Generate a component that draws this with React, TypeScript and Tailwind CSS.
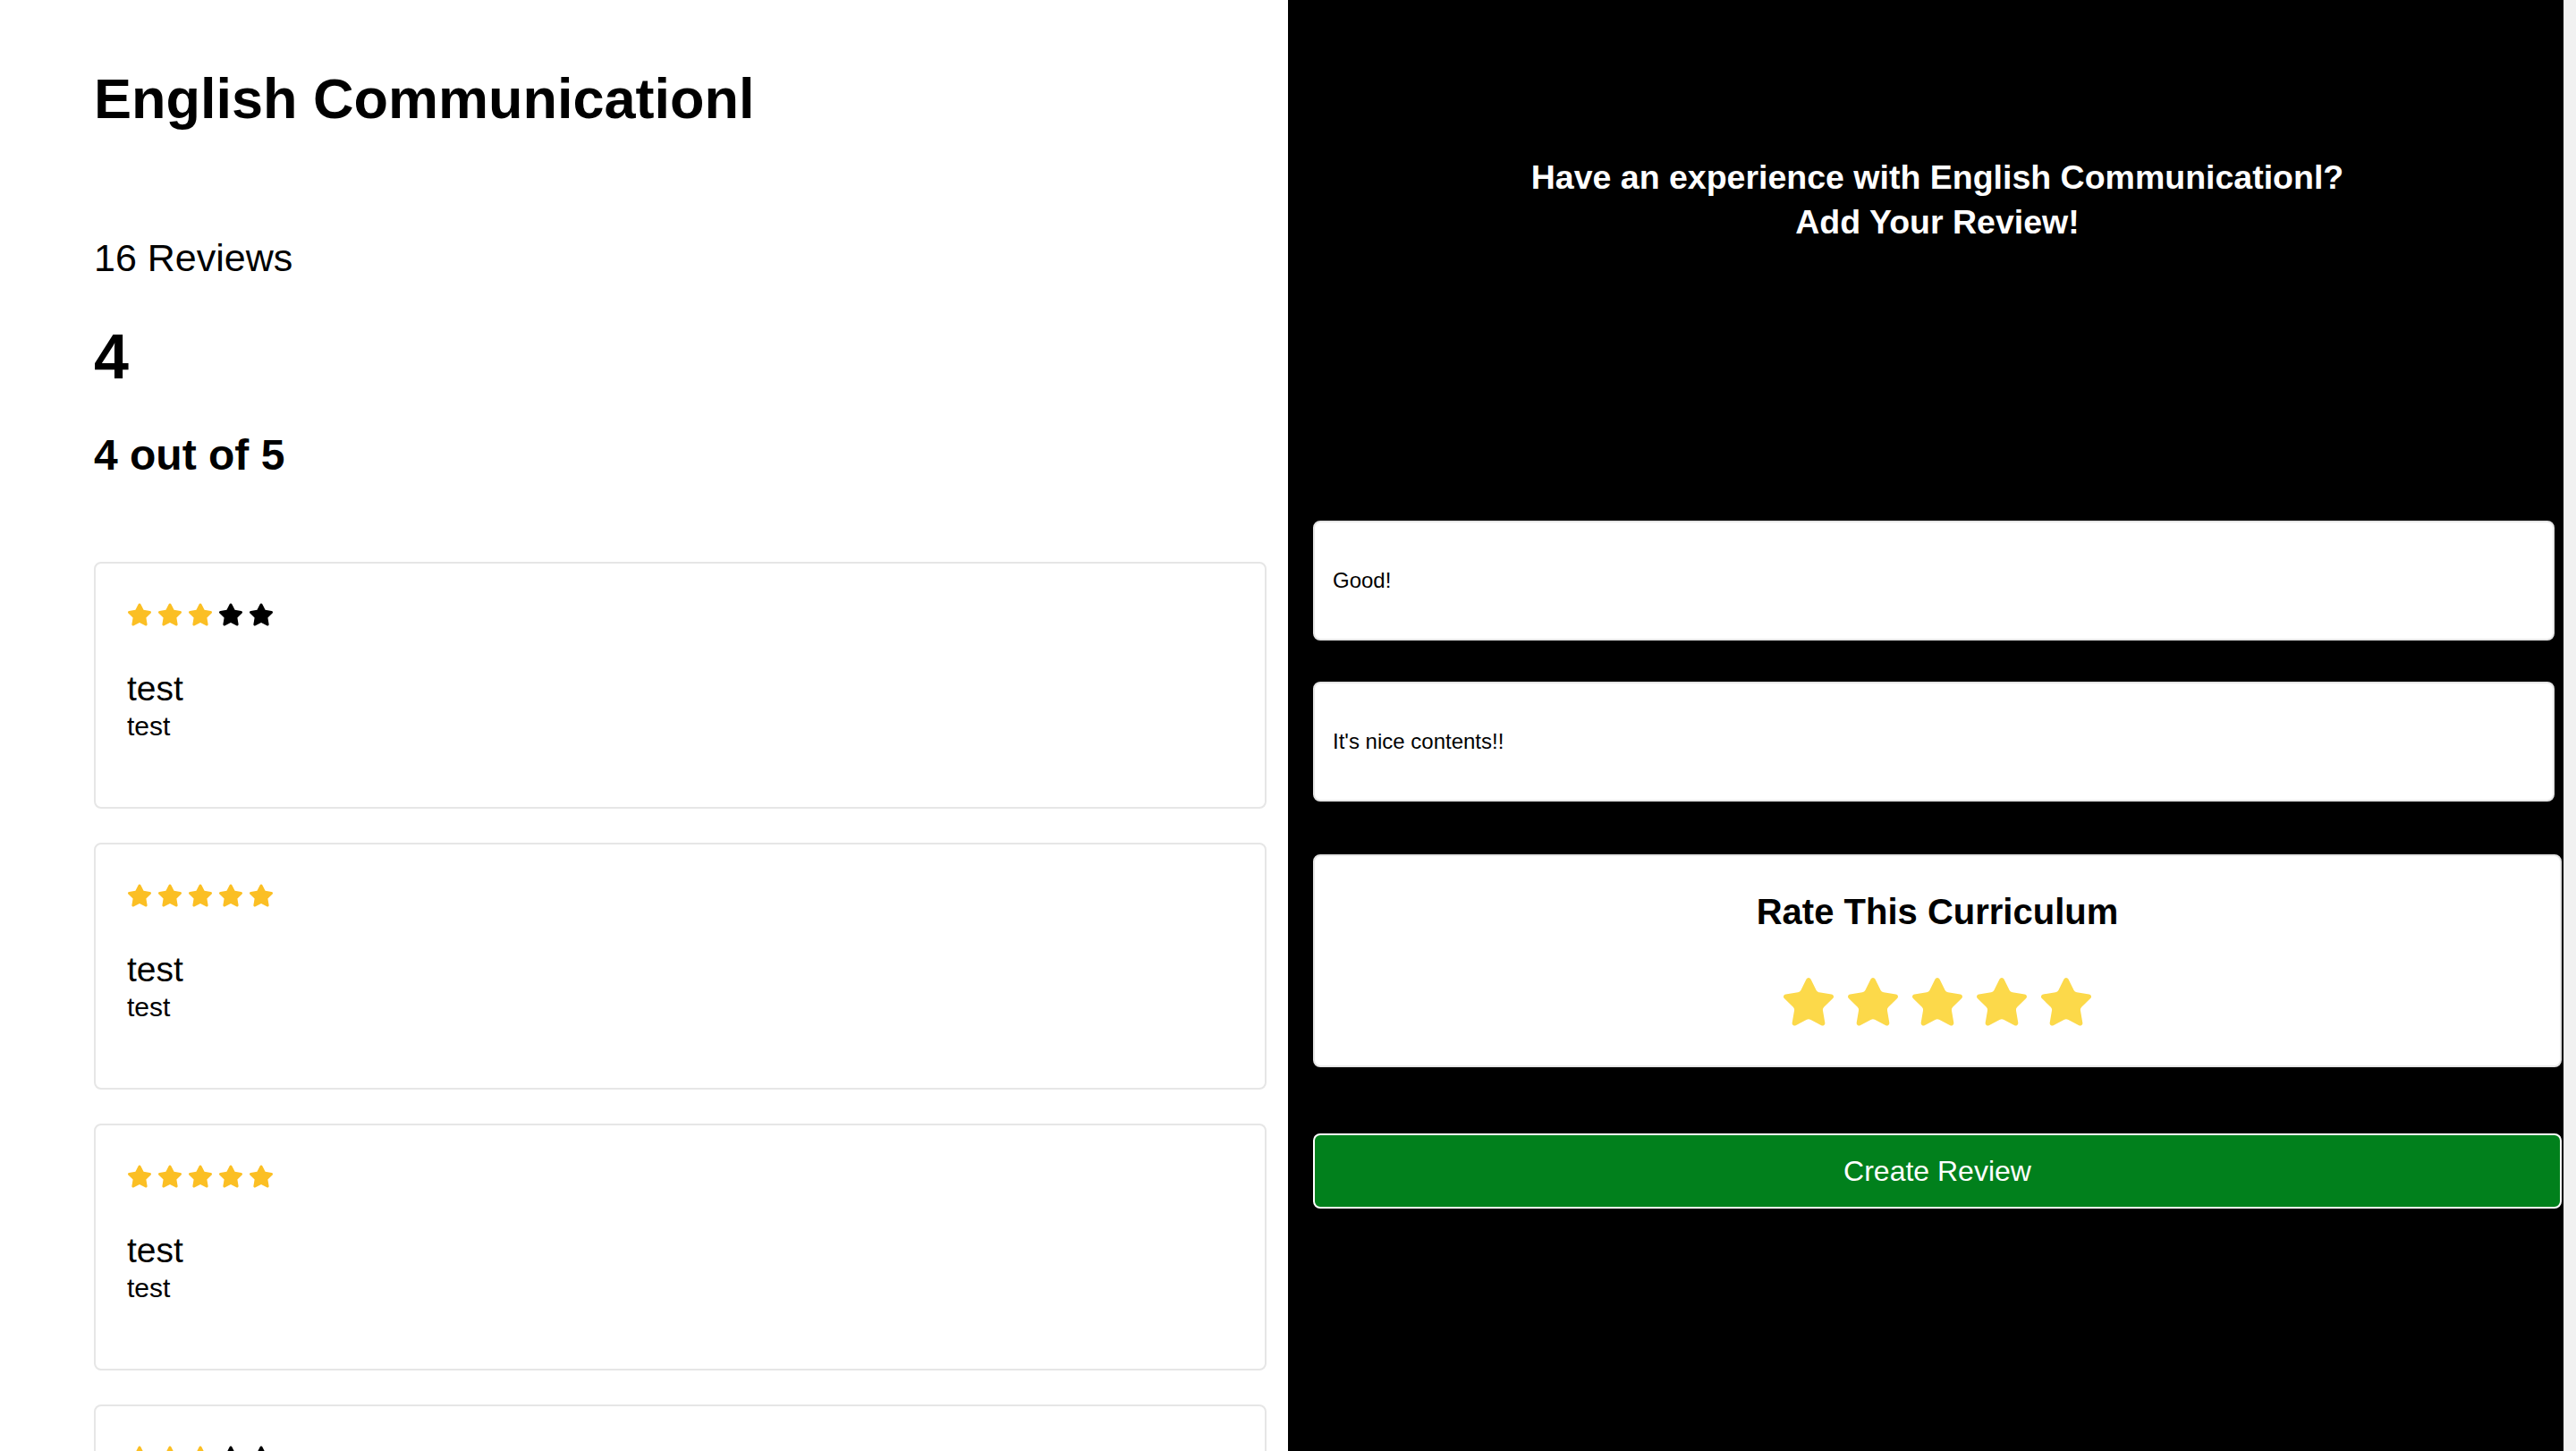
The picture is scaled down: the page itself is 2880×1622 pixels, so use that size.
import { Star } from "lucide-react";
import { FaStar } from "react-icons/fa";

const reviews = [
  { id: 1, rating: 3, title: "test", body: "test" },
  { id: 2, rating: 5, title: "test", body: "test" },
  { id: 3, rating: 5, title: "test", body: "test" },
  { id: 4, rating: 3, title: "test", body: "test" },
];

const ReviewCard = ({ rating, title, body }: { rating: number; title: string; body: string }) => {
  return (
    <div className="h-[276px] shrink-0 rounded-[8px] border-2 border-[#e6e6e6] bg-white pl-[35px] pt-[43px]">
      <div className="flex gap-[6px]">
        {[1, 2, 3, 4, 5].map((n) => (
          <FaStar key={n} size={28} color={n <= rating ? "#fbbf24" : "#000000"} />
        ))}
      </div>
      <p className="mt-[45px] text-[39px] leading-[48px] text-black">{title}</p>
      <p className="text-[30px] leading-[36px] text-black">{body}</p>
    </div>
  );
};

const App = () => {
  return (
    <div className="flex h-[1622px] overflow-hidden font-['Liberation_Sans',Arial,sans-serif]">
      {/* reviews list */}
      <div className="w-[1440px] shrink-0 bg-white pl-[105px] pr-[24px]">
        <h1 className="pt-[70px] text-[63px] font-bold leading-[80px] text-black">English Communicationl</h1>
        <p className="mt-[108px] text-[43px] leading-[60px] text-black">16 Reviews</p>
        <p className="mt-[41px] text-[70px] font-bold leading-[80px] text-black">4</p>
        <p className="mt-[40px] text-[48px] font-bold leading-[60px] text-black">4 out of 5</p>
        <div className="mt-[89px] flex flex-col gap-[38px]">
          {reviews.map((r) => (
            <ReviewCard key={r.id} rating={r.rating} title={r.title} body={r.body} />
          ))}
        </div>
      </div>

      {/* review form */}
      <div className="flex-1 bg-black pl-[28px] pr-[2px]">
        <div className="pt-[173px] text-center text-[37.5px] font-bold leading-[50px] text-white">
          <p>Have an experience with English Communicationl?</p>
          <p>Add Your Review!</p>
        </div>
        <div className="mt-[309px] mr-[8px] flex h-[134px] items-center rounded-[8px] border-2 border-[#e6e6e6] bg-white px-[20px]">
          <span className="text-[24px] text-black">Good!</span>
        </div>
        <div className="mt-[46px] mr-[8px] flex h-[134px] items-center rounded-[8px] border-2 border-[#e6e6e6] bg-white px-[20px]">
          <span className="text-[24px] text-black">It's nice contents!!</span>
        </div>
        <div className="mt-[59px] flex h-[238px] flex-col items-center rounded-[8px] border-2 border-[#e6e6e6] bg-white">
          <h2 className="mt-[36px] text-[40px] font-bold leading-[52px] text-black">Rate This Curriculum</h2>
          <div className="mt-[44px] flex gap-[8px]">
            {[1, 2, 3, 4, 5].map((n) => (
              <Star key={n} size={64} fill="#fcd94a" color="#fcd94a" strokeWidth={1} />
            ))}
          </div>
        </div>
        <button className="mt-[74px] flex h-[84px] w-full items-center justify-center rounded-[8px] border-2 border-white bg-[#01801c] text-[32px] text-white">
          Create Review
        </button>
      </div>

      {/* scrollbar track */}
      <div className="w-[14px] shrink-0 border-l border-[#e4e4e4] bg-[#f1f1f1]" />
    </div>
  );
};

export default App;
